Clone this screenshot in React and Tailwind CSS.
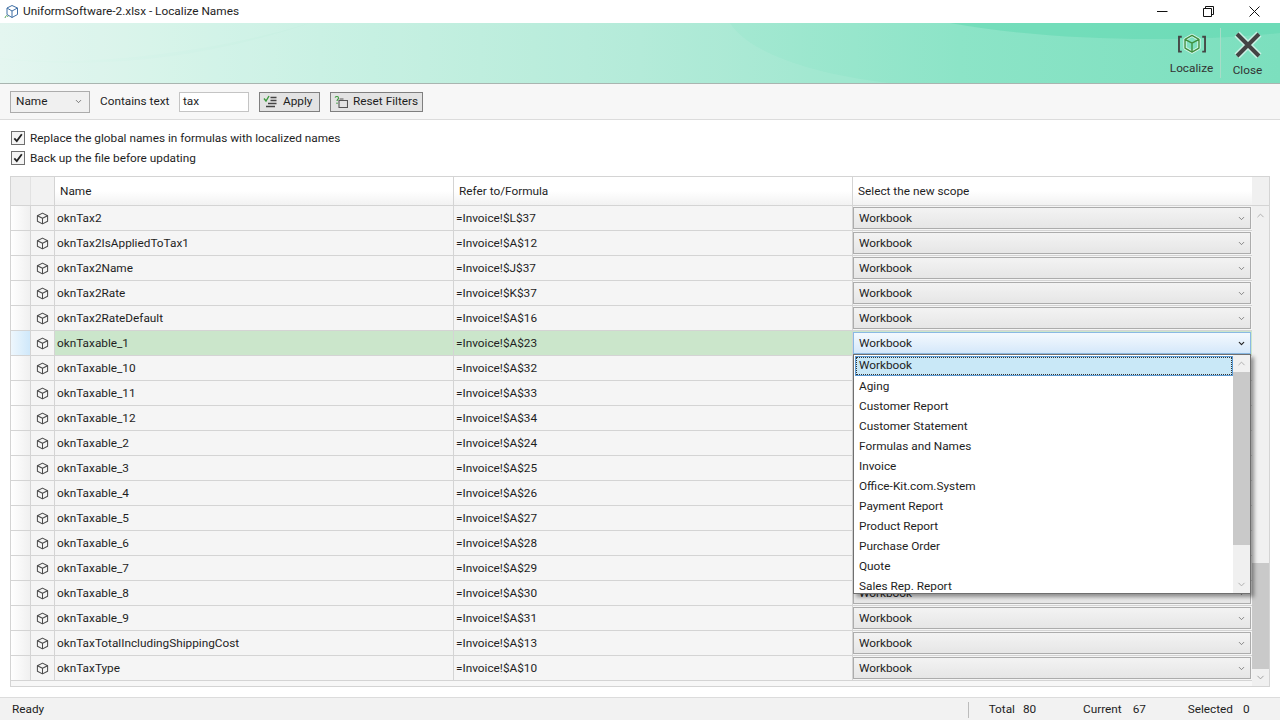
import React from "react";
import { ChevronDown, ChevronUp } from "lucide-react";

const rows = [
  ["oknTax2", "=Invoice!$L$37"],
  ["oknTax2IsAppliedToTax1", "=Invoice!$A$12"],
  ["oknTax2Name", "=Invoice!$J$37"],
  ["oknTax2Rate", "=Invoice!$K$37"],
  ["oknTax2RateDefault", "=Invoice!$A$16"],
  ["oknTaxable_1", "=Invoice!$A$23"],
  ["oknTaxable_10", "=Invoice!$A$32"],
  ["oknTaxable_11", "=Invoice!$A$33"],
  ["oknTaxable_12", "=Invoice!$A$34"],
  ["oknTaxable_2", "=Invoice!$A$24"],
  ["oknTaxable_3", "=Invoice!$A$25"],
  ["oknTaxable_4", "=Invoice!$A$26"],
  ["oknTaxable_5", "=Invoice!$A$27"],
  ["oknTaxable_6", "=Invoice!$A$28"],
  ["oknTaxable_7", "=Invoice!$A$29"],
  ["oknTaxable_8", "=Invoice!$A$30"],
  ["oknTaxable_9", "=Invoice!$A$31"],
  ["oknTaxTotalIncludingShippingCost", "=Invoice!$A$13"],
  ["oknTaxType", "=Invoice!$A$10"],
];

const options = ["Aging", "Customer Report", "Customer Statement", "Formulas and Names", "Invoice", "Office-Kit.com.System", "Payment Report", "Product Report", "Purchase Order", "Quote", "Sales Rep. Report"];

function Cube({ size = 13, color = "#4a4a4a", width = 1.1 }) {
  return (
    <svg width={size} height={size} viewBox="0 0 14 14" fill="none" stroke={color} strokeWidth={width} strokeLinejoin="round">
      <path d="M7 1.2 12.5 4v6L7 12.8 1.5 10V4Z" />
      <path d="M1.5 4 7 6.8 12.5 4M7 6.8v6" />
    </svg>
  );
}

function Check() {
  return (
    <span className="w-[14px] h-[14px] border border-[#6f6f6f] bg-[#f4f4f4] flex items-center justify-center shrink-0">
      <svg width="12" height="12" viewBox="0 0 12 12" fill="none" stroke="#222" strokeWidth="1.8">
        <path d="M2.3 6.3 4.8 9 9.8 2.2" />
      </svg>
    </span>
  );
}

function Row({ name, formula, active, covered }) {
  return (
    <div className={`grid grid-cols-[20px_24px_399px_399px_399px] h-[25px] border-b border-[#d4d4d4] ${active ? "bg-[#cbe6cb]" : "bg-[#f5f5f5]"}`}>
      <div className={`border-r border-[#d4d4d4] ${active ? "bg-gradient-to-r from-[#eef7fd] to-[#cfe8fa]" : "bg-gradient-to-r from-white to-[#f0f0f0]"}`} />
      <div className="border-r border-[#d4d4d4] flex items-center justify-center bg-[#f5f5f5]">
        <Cube />
      </div>
      <div className="border-r border-[#d4d4d4] pl-[2px] pt-[1px] flex items-center">{name}</div>
      <div className="border-r border-[#d4d4d4] pl-[2px] pt-[1px] flex items-center">{formula}</div>
      <div className="py-[1px] pr-[1px]">
        {!covered && (
          <div className={`h-[22px] border flex items-center justify-between pl-[5px] pr-[4px] ${active ? "border-[#8ab9e4] bg-gradient-to-b from-[#f4f9fe] to-[#d5e8fa]" : "border-[#acacac] bg-gradient-to-b from-[#f3f3f3] to-[#e6e6e6]"}`}>
            <span className="pt-[1px]">Workbook</span>
            <ChevronDown size={9} strokeWidth={active ? 3 : 2} color={active ? "#222" : "#666"} />
          </div>
        )}
      </div>
    </div>
  );
}

export default function App() {
  return (
    <div className="relative w-[1280px] h-[720px] overflow-hidden bg-white flex flex-col text-[11.8px] text-[#1e1e1e] font-['Roboto','Open_Sans',sans-serif]">
      <div className="h-[23px] shrink-0 flex items-center bg-white">
        <div className="pl-[4px] w-[23px]">
          <svg width="15" height="16" viewBox="0 0 15 16" fill="none" strokeLinejoin="round">
            <path d="M8 1.5 13.5 4v6.5L8 13.5 3 10.5V4Z" stroke="#3f6fa5" />
            <path d="M3 4 8 7l5.500-3M8 7v6.500" stroke="#3f6fa5" />
            <path d="M1 14c1-3 2-3 3-1" stroke="#5ba65b" />
          </svg>
        </div>
        <span className="pt-[1px]">UniformSoftware-2.xlsx - Localize Names</span>
        <div className="ml-auto flex items-center">
          <svg width="11" height="11" viewBox="0 0 11 11" className="mr-[35px]"><path d="M0 5.500h10.500" stroke="#111" /></svg>
          <svg width="11" height="11" viewBox="0 0 11 11" className="mr-[35px]" fill="none" stroke="#111"><path d="M.5 2.500h8v8h-8zM2.500 2.500v-2h8v8h-2" /></svg>
          <svg width="11" height="11" viewBox="0 0 11 11" className="mr-[20px]" stroke="#111"><path d="M.5.500l10 10M10.500.500l-10 10" /></svg>
        </div>
      </div>

      <div className="relative h-[61px] shrink-0 border-b border-[#a9b5b0] bg-[linear-gradient(90deg,#e2f6ef_0%,#c6f0e2_25%,#aeead6_50%,#8ce4c7_75%,#7cdfbe_100%)] flex justify-end">
        <svg className="absolute inset-0" width="1280" height="60" viewBox="0 0 1280 60" preserveAspectRatio="none">
          <path d="M0 0H310C230 25 130 38 60 38 35 38 15 37 0 35Z" fill="#ffffff" fillOpacity="0.08" />
          <path d="M310 0H730C745 25 800 50 890 60H0V36C120 48 220 30 310 0Z" fill="#ffffff" fillOpacity="0.08" />
          <path d="M950 0C1050 18 1180 20 1280 10V0Z" fill="#5ed8b0" fillOpacity="0.5" />
        </svg>
        <div className="relative w-[58px] border-r border-[#a7dcc8] my-[5px] flex flex-col items-center mr-[-1px]">
          <svg width="34" height="24" viewBox="0 0 34 24" fill="none" className="mt-[5px]">
            <path d="M6 4H3v16h3M28 4h3v16h-3" stroke="#444" strokeWidth="2" />
            <path d="M17 2.500 24.500 6.800v9.400L17 20.500 9.500 16.200V6.800Z" stroke="#fff" strokeOpacity="0.7" strokeWidth="3.500" strokeLinejoin="round" />
            <path d="M17 2.500 24.500 6.800v9.400L17 20.500 9.500 16.200V6.800Z M9.500 6.800 17 11l7.500-4.200M17 11v9.500" stroke="#3f8f3f" strokeWidth="1.500" strokeLinejoin="round" />
          </svg>
          <span className="mt-[5px] text-[#333]">Localize</span>
        </div>
        <div className="relative w-[55px] mr-[5px] flex flex-col items-center pt-[7px]">
          <svg width="30" height="30" viewBox="0 0 30 30">
            <path d="M4 4 26 26M26 4 4 26" stroke="#ffffff" strokeOpacity="0.6" strokeWidth="7" />
            <path d="M4 4 26 26M26 4 4 26" stroke="#444444" strokeWidth="4" />
          </svg>
          <span className="mt-[2px] text-[#333]">Close</span>
        </div>
      </div>

      <div className="h-[36px] shrink-0 bg-[#f7f7f7] border-b border-[#dcdcdc] flex items-center pl-[10px]">
        <div className="w-[80px] h-[22px] border border-[#acacac] bg-[#f0f0f0] flex items-center justify-between pl-[5px] pr-[6px]">
          <span>Name</span>
          <ChevronDown size={9} color="#555" />
        </div>
        <span className="ml-[10px] w-[70px]">Contains text</span>
        <div className="ml-[9px] w-[70px] h-[20px] border border-[#c4c4c4] bg-white flex items-center pl-[3px]">tax</div>
        <div className="ml-[10px] w-[61px] h-[20px] border border-[#7f7f7f] bg-[#e3e3e3] flex items-center pl-[3px] gap-[5px]">
          <svg width="15" height="14" viewBox="0 0 15 14" fill="none" strokeWidth="1.400">
            <path d="M1 3.500 3 6 6 1" stroke="#3c9a3c" />
            <path d="M7.500 2.500h6M7.500 5.500h6M5 8.500h8.500M3 11.500h9" stroke="#444" />
          </svg>
          <span>Apply</span>
        </div>
        <div className="ml-[10px] w-[93px] h-[20px] border border-[#7f7f7f] bg-[#e3e3e3] flex items-center pl-[3px] gap-[5px]">
          <svg width="14" height="14" viewBox="0 0 14 14" fill="none" strokeWidth="1.100">
            <path d="M1 2.500C2 1 4.500 1 4.500 3 4.500 4.500 3 4.500 3 6M3 7.500v1.500" stroke="#3c9a3c" />
            <path d="M5 5.500h8.500v7H5ZM5.500 4h4" stroke="#555" />
          </svg>
          <span>Reset Filters</span>
        </div>
      </div>

      <div className="h-[56px] shrink-0 pl-[11px] pt-[11px] flex flex-col gap-[6px]">
        <label className="flex items-center gap-[5px] h-[14px]"><Check /><span className="pt-[1px]">Replace the global names in formulas with localized names</span></label>
        <label className="flex items-center gap-[5px] h-[14px]"><Check /><span className="pt-[1px]">Back up the file before updating</span></label>
      </div>

      <div className="mx-[10px] h-[511px] shrink-0 border border-[#d4d4d4] flex flex-col bg-[#f7f7f7]">
        <div className="grid grid-cols-[20px_24px_399px_399px_399px_1fr] h-[29px] shrink-0 border-b border-[#d4d4d4]">
          <div className="bg-[#efefef] border-r border-[#e2e2e2]" />
          <div className="bg-[#f2f2f2] border-r border-[#d4d4d4]" />
          <div className="bg-gradient-to-b from-white via-white to-[#f2f2f2] border-r border-[#d4d4d4] pl-[5px] pt-[2px] flex items-center">Name</div>
          <div className="bg-gradient-to-b from-white via-white to-[#f2f2f2] border-r border-[#d4d4d4] pl-[5px] pt-[2px] flex items-center">Refer to/Formula</div>
          <div className="bg-gradient-to-b from-white via-white to-[#f2f2f2] pl-[5px] pt-[2px] flex items-center">Select the new scope</div>
          <div className="bg-[#f0f0f0]" />
        </div>
        <div className="flex flex-1 min-h-0">
          <div className="w-[1241px] shrink-0">
            {rows.map((r, i) => (
              <Row key={r[0]} name={r[0]} formula={r[1]} active={r[0] === "oknTaxable_1"} covered={i >= 6 && i <= 14} />
            ))}
          </div>
          <div className="flex-1 flex flex-col bg-[#f0f0f0] items-stretch">
            <div className="h-[18px] flex items-center justify-center"><ChevronUp size={11} color="#aaa" /></div>
            <div className="h-[339px]" />
            <div className="h-[106px] bg-[#c9c9c9]" />
            <div className="h-[17px] flex items-center justify-center"><ChevronDown size={11} color="#999" /></div>
          </div>
        </div>
      </div>

      <div className="mt-[10px] flex-1 bg-[#f2f2f2] border-t border-[#dcdcdc] flex items-center pl-[12px] pt-[1px]">
        <span>Ready</span>
        <div className="ml-auto w-[1px] h-[16px] bg-[#bcbcbc] mr-[20px]" />
        <span className="mr-[8px]">Total</span><span className="mr-[46px] w-[14px]">80</span>
        <span className="mr-[11px]">Current</span><span className="mr-[41px] w-[14px]">67</span>
        <span className="mr-[10px]">Selected</span><span className="mr-[30px] w-[7px]">0</span>
      </div>

      <div className="absolute left-[853px] top-[354px] w-[398px] h-[240px] border border-[#6f6f6f] bg-white shadow-[3px_3px_4px_rgba(0,0,0,0.4)] flex overflow-hidden">
        <div className="flex-1 min-w-0 pt-[1px] pl-[1px]">
          <div className="h-[20px] bg-[#c9e8f7] border border-[#5a9bd5] flex items-center pl-[3px] outline-1 outline-dotted outline-[#333] -outline-offset-2">Workbook</div>
          {options.map((o) => (
            <div key={o} className="h-[20px] pt-[1px] flex items-center pl-[4px]">{o}</div>
          ))}
        </div>
        <div className="w-[17px] shrink-0 bg-[#f0f0f0] flex flex-col">
          <div className="h-[17px] flex items-center justify-center"><ChevronUp size={11} color="#aaa" /></div>
          <div className="h-[173px] bg-[#c9c9c9]" />
          <div className="flex-1" />
          <div className="h-[17px] flex items-center justify-center"><ChevronDown size={11} color="#aaa" /></div>
        </div>
      </div>
    </div>
  );
}
